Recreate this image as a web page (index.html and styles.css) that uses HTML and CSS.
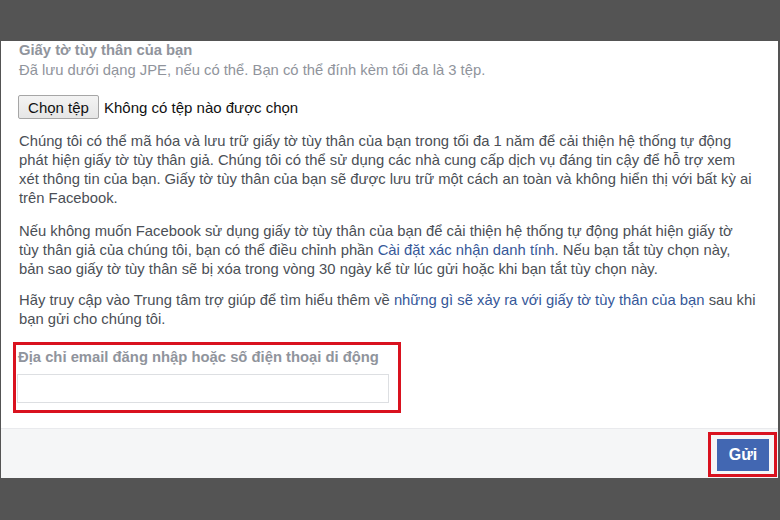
FILE: index.html
```html
<!DOCTYPE html>
<html lang="vi">
<head>
<meta charset="utf-8">
<title>Giấy tờ tùy thân</title>
<link rel="stylesheet" href="styles.css">
</head>
<body>
<div class="panel">
  <div class="content">
    <div class="title">Giấy tờ tùy thân của bạn</div>
    <div class="hint">Đã lưu dưới dạng JPE, nếu có thể. Bạn có thể đính kèm tối đa là 3 tệp.</div>
    <div class="file-row">
      <span class="file-btn">Chọn tệp</span>
      <span class="file-name">Không có tệp nào được chọn</span>
    </div>
    <p class="para">Chúng tôi có thể mã hóa và lưu trữ giấy tờ tùy thân của bạn trong tối đa 1 năm để cải thiện hệ thống tự động<br>phát hiện giấy tờ tùy thân giả. Chúng tôi có thể sử dụng các nhà cung cấp dịch vụ đáng tin cậy để hỗ trợ xem<br>xét thông tin của bạn. Giấy tờ tùy thân của bạn sẽ được lưu trữ một cách an toàn và không hiển thị với bất kỳ ai<br>trên Facebook.</p>
    <p class="para">Nếu không muốn Facebook sử dụng giấy tờ tùy thân của bạn để cải thiện hệ thống tự động phát hiện giấy tờ<br>tùy thân giả của chúng tôi, bạn có thể điều chỉnh phần <a class="link">Cài đặt xác nhận danh tính</a>. Nếu bạn tắt tùy chọn này,<br>bản sao giấy tờ tùy thân sẽ bị xóa trong vòng 30 ngày kể từ lúc gửi hoặc khi bạn tắt tùy chọn này.</p>
    <p class="para">Hãy truy cập vào Trung tâm trợ giúp để tìm hiểu thêm về <a class="link">những gì sẽ xảy ra với giấy tờ tùy thân của bạn</a> sau khi<br>bạn gửi cho chúng tôi.</p>
    <div class="mark field">
      <div class="label">Địa chỉ email đăng nhập hoặc số điện thoại di động</div>
      <div class="input"></div>
    </div>
  </div>
  <div class="footer">
    <div class="mark submit-mark">
      <span class="submit">Gửi</span>
    </div>
  </div>
</div>
</body>
</html>
```
FILE: styles.css
```css
html, body {
  margin: 0;
  padding: 0;
}
body {
  background: #545454;
  font-family: "Liberation Sans", Arial, sans-serif;
  font-size: 14.8px;
  width: 780px;
  height: 520px;
  overflow: hidden;
}
.panel {
  margin-top: 41px;
  margin-left: 1px;
  width: 777px;
  background: #ffffff;
}
.content {
  padding: 0 6px 15px 17px;
}
.title {
  font-weight: bold;
  color: #90949c;
  line-height: 18px;
  padding-left: 1px;
}
.hint {
  color: #90949c;
  line-height: 18px;
  margin-top: 2px;
  padding-left: 1px;
}
.file-row {
  display: flex;
  align-items: center;
  margin-top: 16px;
  height: 24px;
}
.file-btn {
  box-sizing: border-box;
  height: 24px;
  width: 81px;
  display: flex;
  align-items: center;
  justify-content: center;
  color: #111111;
  font-size: 15px;
  background: linear-gradient(#f3f3f3, #e6e6e6);
  border: 1px solid #a6a6a6;
  border-radius: 2px;
}
.file-name {
  margin-left: 5px;
  color: #111111;
  font-size: 15px;
}
.para {
  margin: 13px 0 0 0;
  padding-left: 1px;
  color: #4b4f56;
  line-height: 19px;
}
.para + .para {
  margin-top: 14px;
}
.para + .para + .para {
  margin-top: 12px;
}
.link {
  color: #365899;
  text-decoration: none;
}
.mark {
  border: 3px solid #d9121f;
}
.field {
  width: 380px;
  margin-top: 13px;
  margin-left: -5px;
  padding: 3px 1px 7px 1px;
}
.label {
  font-weight: bold;
  color: #90949c;
  line-height: 18px;
  padding-left: 1px;
}
.input {
  box-sizing: border-box;
  margin-top: 8px;
  width: 372px;
  height: 29px;
  border: 1px solid #dddfe2;
  background: #ffffff;
}
.footer {
  box-sizing: border-box;
  height: 50px;
  background: #f5f6f7;
  border-top: 1px solid #e9eaed;
  display: flex;
  justify-content: flex-end;
  align-items: flex-start;
  padding: 3px 1px 0 0;
}
.submit-mark {
  padding: 4px 5px 3px 6px;
}
.submit {
  box-sizing: border-box;
  display: flex;
  align-items: center;
  justify-content: center;
  width: 52px;
  height: 32px;
  background: #4267b2;
  border: 1px solid #4267b2;
  color: #ffffff;
  font-weight: bold;
  font-size: 16px;
}
```
